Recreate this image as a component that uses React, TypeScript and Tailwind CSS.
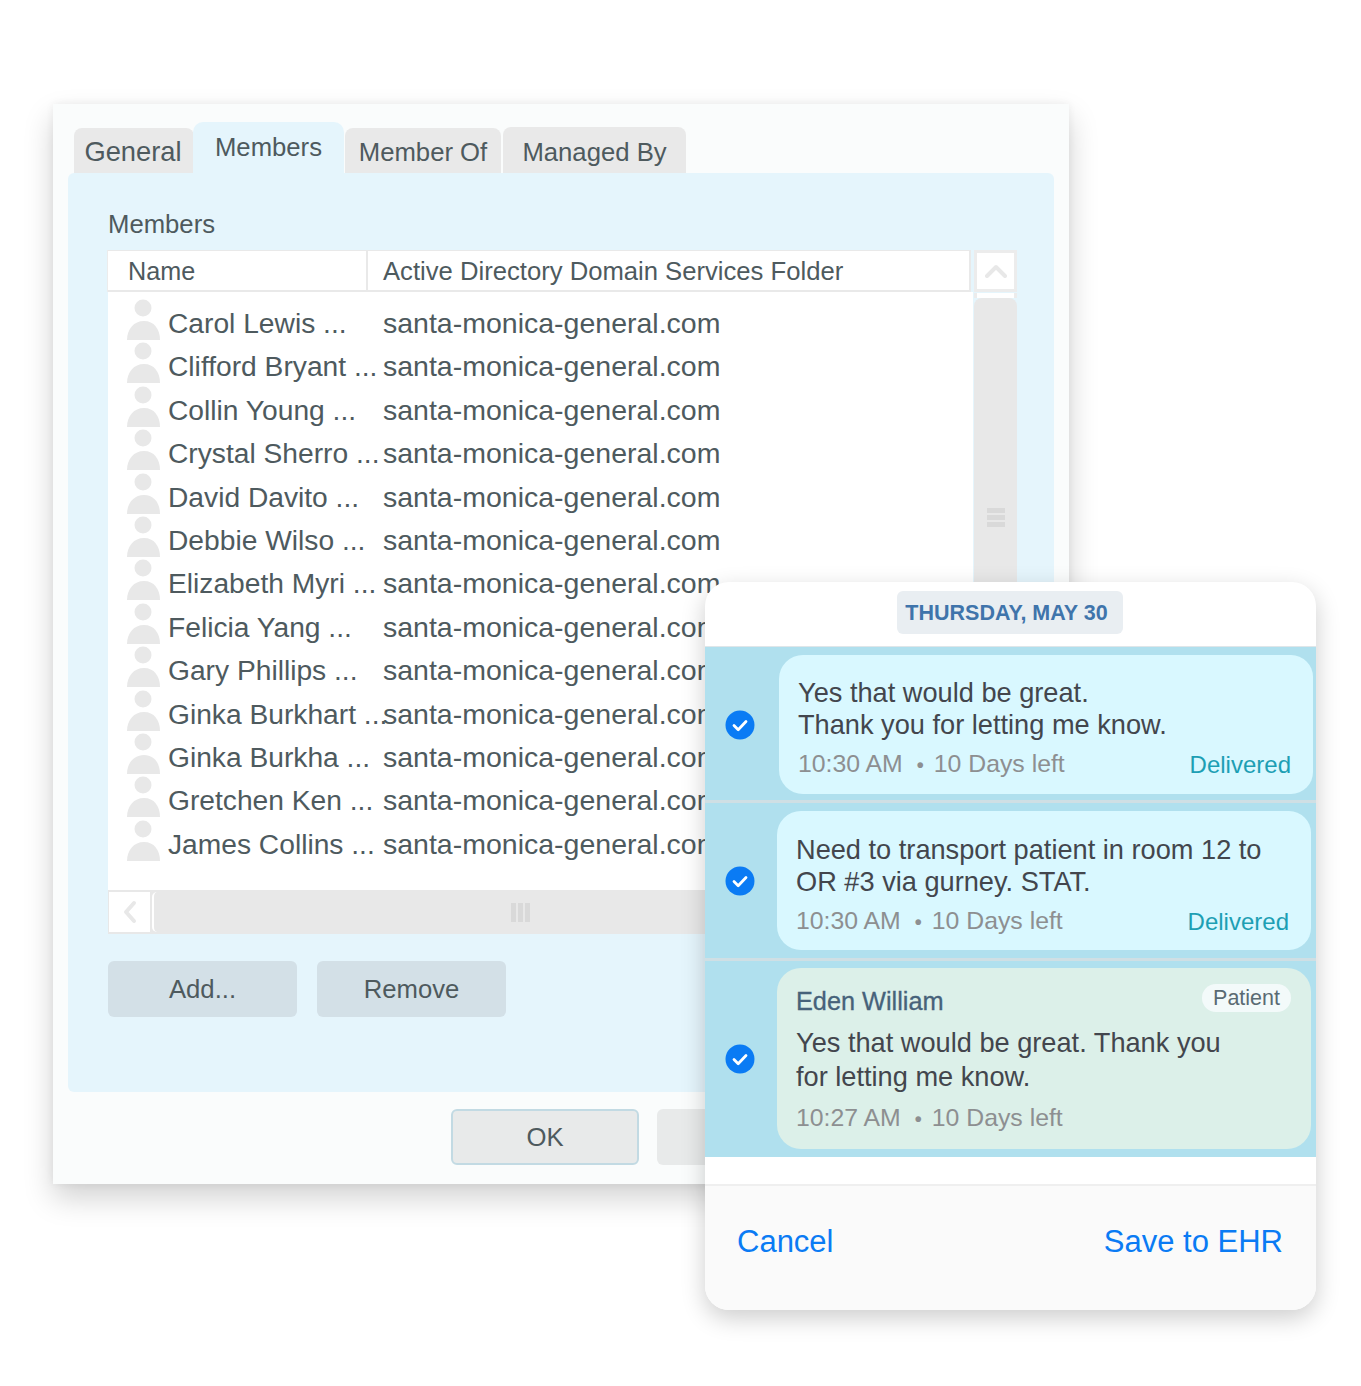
const members = [
  "Carol Lewis ...",
  "Clifford Bryant ...",
  "Collin Young ...",
  "Crystal Sherro ...",
  "David Davito ...",
  "Debbie Wilso ...",
  "Elizabeth Myri ...",
  "Felicia Yang ...",
  "Gary Phillips ...",
  "Ginka Burkhart ...",
  "Ginka Burkha ...",
  "Gretchen Ken ...",
  "James Collins ...",
];

function PersonIcon() {
  return (
    <svg width="34" height="42" viewBox="0 0 34 42" className="shrink-0 -mt-[3px]">
      <circle cx="16" cy="9" r="8.5" fill="#e8e8e8" />
      <path d="M0 41c0-11 7-19 17-19s16 8 16 19z" fill="#e8e8e8" />
    </svg>
  );
}

function CheckDot() {
  return (
    <svg width="30" height="30" viewBox="0 0 30 30" className="shrink-0">
      <circle cx="15" cy="15" r="14.5" fill="#0a7bf4" />
      <path d="M9 15.5l4.2 4.2L21 11.5" fill="none" stroke="#fff" strokeWidth="2.8" strokeLinecap="round" strokeLinejoin="round" />
    </svg>
  );
}

function TimeLeft({ time }: { time: string }) {
  return (
    <span className="text-[24.8px] leading-[30px] text-[#8d8f91]">
      {time}
      <span className="ml-[14px] mr-[10px] text-[20px] font-bold">•</span>
      10 Days left
    </span>
  );
}

function Bubble({ lines, time, top }: { lines: string[]; time: string; top: string }) {
  return (
    <div className={`h-[139px] rounded-l-[24px] rounded-r-[22px] bg-[#d9f8ff] pl-[19px] pr-[22px] ${top}`}>
      {lines.map((l) => (
        <p key={l} className="text-[27.2px] leading-[32px] text-[#43464d]">{l}</p>
      ))}
      <div className="mt-[8px] flex items-center justify-between">
        <TimeLeft time={time} />
        <span className="text-[24px] leading-[30px] text-[#1d9fb4]">Delivered</span>
      </div>
    </div>
  );
}

export default function App() {
  return (
    <div className="relative h-[1386px] w-[1361px] overflow-hidden bg-white pl-[53px] pt-[104px] font-['Liberation_Sans',sans-serif] text-[#4e5a5e]">
      {/* properties dialog */}
      <div className="h-[1080px] w-[1016px] bg-[#fafcfc] px-[15px] pt-[18px] shadow-[0_14px_28px_rgba(0,0,0,0.18),0_0_8px_rgba(0,0,0,0.06)]">
        <div className="flex h-[51px] items-end pl-[6px]">
          <div className="flex h-[45px] w-[120px] items-center justify-center rounded-t-[8px] bg-[#e9e9e9] pr-[2px] pt-[4px] text-[27.3px]">General</div>
          <div className="-ml-px flex h-[51px] w-[151px] items-start justify-center rounded-t-[10px] bg-[#e5f5fc] pt-[6px] text-[25.7px]">Members</div>
          <div className="ml-px flex h-[45px] w-[156px] items-center justify-center rounded-t-[8px] bg-[#e9e9e9] pt-[4px] text-[25.7px]">Member Of</div>
          <div className="ml-[2px] flex h-[46px] w-[183px] items-center justify-center rounded-t-[8px] bg-[#e9e9e9] pt-[4px] text-[25.7px]">Managed By</div>
        </div>

        <div className="h-[919px] rounded-[6px] bg-[#e5f5fc] pl-[40px] pt-[34px]">
          <div className="text-[25.7px] leading-[34px]">Members</div>

          <div className="mt-[9px] flex w-[909px] items-start">
            <div className="w-[865px]">
              <div className="mr-[2px] flex h-[42px] border-t border-b-[2px] border-[#e9e9e9] bg-[#e9e9e9] pr-[2px] leading-[40px] shadow-[-1px_0_0_#ececec]">
                <div className="w-[258px] bg-white pl-[20px] text-[25.2px]">Name</div>
                <div className="ml-[2px] flex-1 bg-white pl-[15px] text-[25.65px]">Active Directory Domain Services Folder</div>
              </div>
              <div className="h-[598px] bg-white pt-[10px]">
                {members.map((name) => (
                  <div key={name} className="flex h-[43.4px] items-start pl-[19px] leading-[43px]">
                    <PersonIcon />
                    <div className="ml-[7px] w-[215px] shrink-0 whitespace-nowrap text-[28.2px]">{name}</div>
                    <div className="whitespace-nowrap text-[28.5px]">santa-monica-general.com</div>
                  </div>
                ))}
              </div>
            </div>
            <div className="ml-[1px] w-[43px]">
              <div className="flex h-[42px] items-center justify-center border-[3px] border-[#ececec] bg-white">
                <svg width="24" height="14" viewBox="0 0 24 14">
                  <path d="M3 12l9-9 9 9" fill="none" stroke="#e8e8e8" strokeWidth="4" strokeLinecap="round" strokeLinejoin="round" />
                </svg>
              </div>
              <div className="mt-[1px] h-[5px] border-x-[3px] border-[#ececec] bg-white" />
              <div className="flex h-[592px] flex-col items-center gap-[2px] rounded-t-[8px] bg-[#e8e8e8] pt-[210px]">
                <div className="h-[5px] w-[18px] bg-[#d9d9d9]" />
                <div className="h-[5px] w-[18px] bg-[#d9d9d9]" />
                <div className="h-[5px] w-[18px] bg-[#d9d9d9]" />
              </div>
            </div>
          </div>

          <div className="flex h-[44px] w-[909px] items-stretch bg-[#e8e8e8] py-[2px] pl-[1px]">
            <div className="flex w-[41px] items-center justify-center bg-white">
              <svg width="14" height="24" viewBox="0 0 14 24">
                <path d="M11 3l-8 9 8 9" fill="none" stroke="#e8e8e8" strokeWidth="4" strokeLinecap="round" strokeLinejoin="round" />
              </svg>
            </div>
            <div className="ml-[2px] w-[5px] rounded-l-[5px] border-l-[2px] border-white" />
            <div className="ml-[354px] flex items-center gap-[2px]">
              <div className="h-[19px] w-[5px] bg-[#d9d9d9]" />
              <div className="h-[19px] w-[5px] bg-[#d9d9d9]" />
              <div className="h-[19px] w-[5px] bg-[#d9d9d9]" />
            </div>
          </div>

          <div className="mt-[27px] flex gap-[20px] text-[25.7px]">
            <div className="flex h-[56px] w-[189px] items-center justify-center rounded-[6px] bg-[#d3e0e7]">Add...</div>
            <div className="flex h-[56px] w-[189px] items-center justify-center rounded-[6px] bg-[#d3e0e7]">Remove</div>
          </div>
        </div>

        <div className="mt-[17px] flex gap-[18px] pl-[383px] text-[25.7px]">
          <div className="flex h-[56px] w-[188px] items-center justify-center rounded-[6px] border-[2px] border-[#c2dae3] bg-[#e8eaea]">OK</div>
          <div className="h-[56px] w-[188px] rounded-[6px] bg-[#e8eaea]" />
        </div>
      </div>

      {/* messages popup, sits over the dialog */}
      <div className="absolute left-[705px] top-[582px] h-[728px] w-[611px] overflow-hidden rounded-[24px] bg-white shadow-[0_8px_24px_rgba(0,0,0,0.2)]">
        <div className="flex h-[65px] justify-center border-b border-[#dfe6e9] pr-[2px] pt-[9px]">
          <div className="flex h-[43px] w-[226px] items-center justify-center rounded-[6px] bg-[#e9eef2] pr-[6px] pt-px text-[21.5px] font-bold text-[#3f74ab]">THURSDAY, MAY 30</div>
        </div>

        <div className="bg-[#b0e0ee]">
          <div className="flex h-[153px] items-start pt-[8px]">
            <div className="flex h-[139px] w-[74px] shrink-0 items-center justify-center pr-[5px]"><CheckDot /></div>
            <div className="w-[534px]">
              <Bubble lines={["Yes that would be great.", "Thank you for letting me know."]} time="10:30 AM" top="pt-[22px]" />
            </div>
          </div>
          <div className="h-[3px] bg-[#cfdfe4]" />
          <div className="flex h-[155px] items-start pt-[8px]">
            <div className="flex h-[139px] w-[72px] shrink-0 items-center justify-center pr-[3px]"><CheckDot /></div>
            <div className="w-[534px]">
              <Bubble lines={["Need to transport patient in room 12 to", "OR #3 via gurney. STAT."]} time="10:30 AM" top="pt-[23px]" />
            </div>
          </div>
          <div className="h-[3px] bg-[#cfdfe4]" />
          <div className="flex h-[196px] items-start pt-[7px]">
            <div className="flex h-[181px] w-[72px] shrink-0 items-center justify-center pr-[3px]"><CheckDot /></div>
            <div className="h-[181px] w-[534px] rounded-[24px] bg-[#dcf0e9] pl-[19px] pr-[20px] pt-[16px]">
              <div className="flex items-start justify-between">
                <span className="mt-[1px] text-[25.3px] leading-[32px] text-[#46627a] [-webkit-text-stroke:0.3px_#46627a]">Eden William</span>
                <span className="rounded-full bg-[#f3fafa] px-[11px] text-[21.5px] leading-[28px] text-[#5a6b73]">Patient</span>
              </div>
              <p className="mt-[9px] text-[27.2px] leading-[34px] text-[#43464d]">Yes that would be great. Thank you</p>
              <p className="text-[27.2px] leading-[34px] text-[#43464d]">for letting me know.</p>
              <div className="mt-[9px] leading-[30px]"><TimeLeft time="10:27 AM" /></div>
            </div>
          </div>
        </div>

        <div className="mt-[27px] flex h-[126px] items-start justify-between border-t-[2px] border-[#efefef] bg-[#fafafa] pl-[32px] pr-[33px] pt-[37px] text-[31px] leading-[38px] text-[#0a7bf4]">
          <span>Cancel</span>
          <span>Save to EHR</span>
        </div>
      </div>
    </div>
  );
}
